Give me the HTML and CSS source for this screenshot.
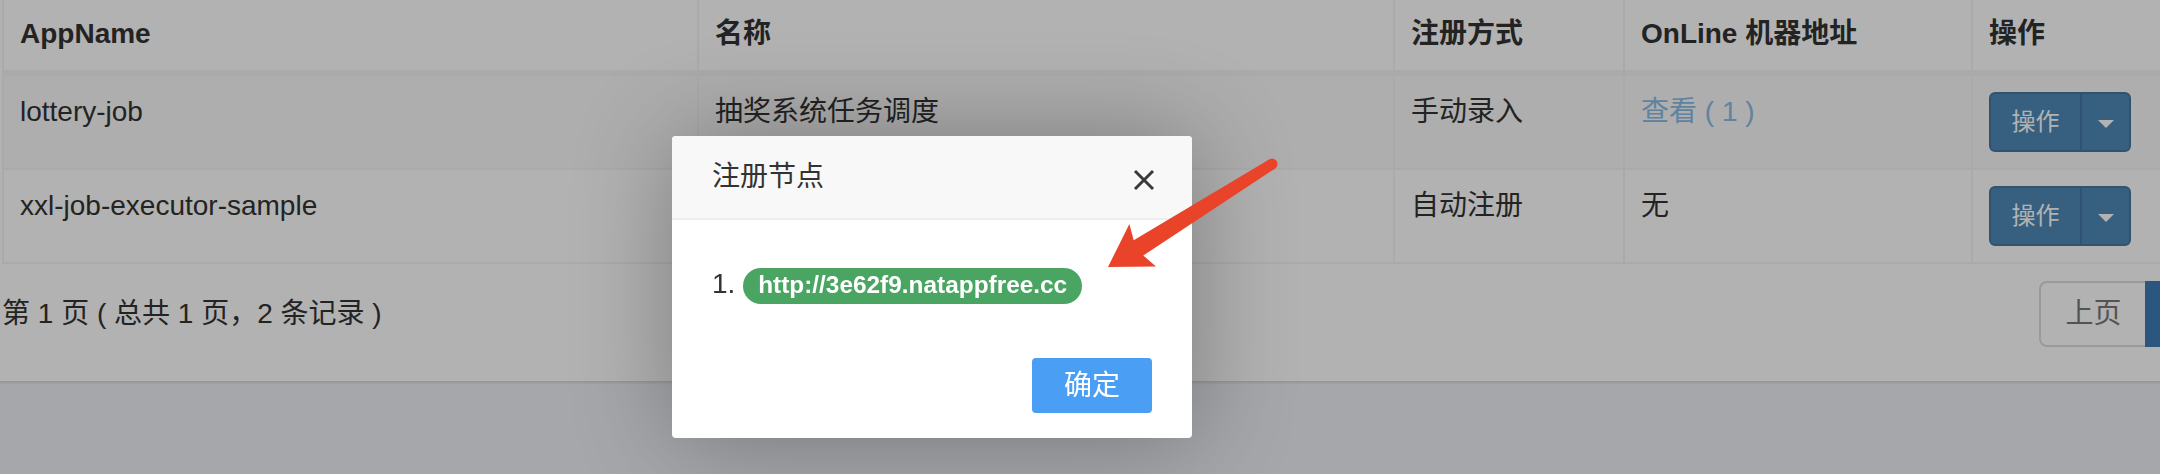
FILE: index.html
```html
<!DOCTYPE html>
<html lang="zh-CN">
<head>
<meta charset="utf-8">
<title>执行器管理</title>
<link rel="stylesheet" href="styles.css">
</head>
<body>
<div class="content">
  <div class="box">
    <table class="grid">
      <thead>
        <tr>
          <th class="c1">AppName</th>
          <th class="c2">名称</th>
          <th class="c3">注册方式</th>
          <th class="c4">OnLine 机器地址</th>
          <th class="c5">操作</th>
        </tr>
      </thead>
      <tbody>
        <tr class="odd">
          <td>lottery-job</td>
          <td>抽奖系统任务调度</td>
          <td>手动录入</td>
          <td><a class="link" href="#">查看 ( 1 )</a></td>
          <td><div class="btn-group"><span class="btn-main">操作</span><span class="btn-caret"><i class="caret"></i></span></div></td>
        </tr>
        <tr>
          <td>xxl-job-executor-sample</td>
          <td>示例执行器</td>
          <td>自动注册</td>
          <td>无</td>
          <td><div class="btn-group"><span class="btn-main">操作</span><span class="btn-caret"><i class="caret"></i></span></div></td>
        </tr>
      </tbody>
    </table>
    <div class="pager">
      <div class="info">第 1 页 ( 总共 1 页，2 条记录 )</div>
      <ul class="pagination">
        <li class="disabled"><span>上页</span></li>
        <li class="active"><span>1</span></li>
        <li class="disabled last"><span>下页</span></li>
      </ul>
    </div>
  </div>
</div>

<div class="shade"></div>

<div class="layer">
  <div class="layer-title">
    <span>注册节点</span>
    <svg class="close" width="22" height="22" viewBox="0 0 22 22"><path d="M2 2 L20 20 M20 2 L2 20" /></svg>
  </div>
  <div class="layer-content">1. <span class="badge">http://3e62f9.natappfree.cc</span></div>
  <div class="layer-btn"><a class="ok" href="#">确定</a></div>
</div>

<svg class="annot" width="2160" height="474" viewBox="0 0 2160 474">
  <polygon points="1108,267 1129.4,224 1133.7,240.3 1269.1,159.5 1274.9,168.7 1143.3,255.5 1156,266.4" />
  <circle cx="1272" cy="164.1" r="5.5" />
</svg>
</body>
</html>
```

FILE: styles.css
```css
* { box-sizing: border-box; }

html, body {
  margin: 0;
  padding: 0;
  width: 2160px;
  height: 474px;
  overflow: hidden;
}

body {
  background: #ecf0f5;
  font-family: "Liberation Sans", "Noto Sans CJK SC", sans-serif;
  font-size: 28px;
  line-height: 40px;
  color: #333;
  position: relative;
}

.content {
  width: 2360px;
}

.box {
  width: 2319px;
  background: #fff;
  padding: 0 0 34px 2px;
  box-shadow: 0 2px 2px rgba(0, 0, 0, 0.1);
}

.grid {
  width: 2317px;
  table-layout: fixed;
  border-collapse: separate;
  border-spacing: 0;
  border-left: 2px solid #f4f4f4;
}

.grid th,
.grid td {
  text-align: left;
  vertical-align: top;
  border-right: 2px solid #f4f4f4;
  white-space: nowrap;
  overflow: hidden;
}

.grid th {
  font-weight: bold;
  padding: 14px 16px 16px;
  border-bottom: 6px solid #f4f4f4;
}

.grid td {
  padding: 16px;
  border-bottom: 2px solid #f4f4f4;
}

.grid .c1 { width: 695px; }
.grid .c2 { width: 696px; }
.grid .c3 { width: 230px; }
.grid .c4 { width: 348px; }

.grid tr.odd td { background: #f9f9f9; }

.link {
  color: #8abce6;
  text-decoration: none;
}

.btn-group {
  display: inline-flex;
  vertical-align: top;
  height: 60px;
  border: 2px solid #47789f;
  border-radius: 6px;
  overflow: hidden;
  background: #5089b6;
}

.btn-main {
  width: 91px;
  height: 56px;
  display: flex;
  align-items: center;
  justify-content: center;
  color: #fff;
  font-size: 24px;
  border-right: 2px solid #47789f;
}

.btn-caret {
  width: 47px;
  height: 56px;
  display: flex;
  align-items: center;
  justify-content: center;
}

.caret {
  display: block;
  width: 0;
  height: 0;
  border-top: 8px solid #fff;
  border-left: 8px solid transparent;
  border-right: 8px solid transparent;
  margin-top: 4px;
}

.pager {
  display: flex;
  align-items: flex-start;
}

.info {
  margin-top: 30px;
}

.pagination {
  list-style: none;
  margin: 17px 0 0 auto;
  padding: 0;
  display: flex;
}

.pagination li span {
  display: block;
  padding: 11px 24px;
  line-height: 40px;
  border: 2px solid #ddd;
  background: #fff;
  color: #777;
}

.pagination li:first-child span {
  border-radius: 8px 0 0 8px;
}

.pagination li + li span {
  margin-left: -2px;
}

.pagination li.last span {
  border-radius: 0 8px 8px 0;
}

.pagination li.active span {
  background: #3e7bb4;
  border-color: #3e7bb4;
  color: #fff;
  position: relative;
}

.shade {
  position: fixed;
  left: 0;
  top: 0;
  width: 2160px;
  height: 474px;
  background: rgba(0, 0, 0, 0.3);
}

.layer {
  position: absolute;
  left: 672px;
  top: 136px;
  width: 520px;
  background: #fff;
  border-radius: 4px;
  box-shadow: 2px 2px 100px rgba(0, 0, 0, 0.3);
  overflow: hidden;
}

.layer-title {
  height: 84px;
  display: flex;
  align-items: center;
  justify-content: space-between;
  padding: 0 37px 0 40px;
  background: #f8f8f8;
  border-bottom: 2px solid #eee;
  color: #333;
  font-size: 28px;
}

.close {
  margin-top: 6px;
}

.close path {
  stroke: #3a3a3a;
  stroke-width: 3;
  fill: none;
}

.layer-content {
  padding: 40px;
  line-height: 48px;
  font-size: 28px;
  color: #333;
}

.badge {
  display: inline-block;
  font-size: 24.4px;
  line-height: 24px;
  font-weight: bold;
  color: #fff;
  background: #4ba562;
  padding: 5px 15px 7px;
  border-radius: 18px;
}

.layer-btn {
  text-align: right;
  padding: 0 30px 25px;
}

.ok {
  display: inline-block;
  margin: 10px 10px 0;
  height: 55px;
  line-height: 51px;
  padding: 0 30px;
  border: 2px solid #4a9ff5;
  background: #4a9ff5;
  color: #fff;
  border-radius: 4px;
  font-size: 28px;
  text-decoration: none;
}

.annot {
  position: absolute;
  left: 0;
  top: 0;
  pointer-events: none;
}

.annot polygon,
.annot circle {
  fill: #e9442a;
}
```
